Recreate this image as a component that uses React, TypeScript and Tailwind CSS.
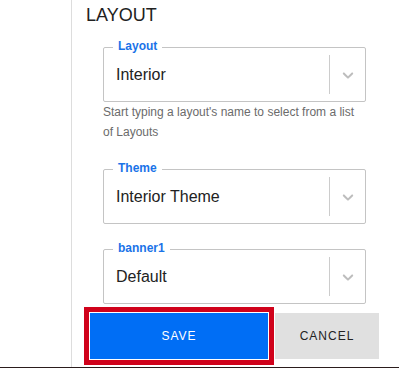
import React from "react";

const Chevron = () => (
  <svg width="18" height="18" viewBox="0 0 20 20" className="fill-[#bdbdbd]">
    <path d="M4.516 7.548c0.436-0.446 1.043-0.481 1.576 0l3.908 3.747 3.908-3.747c0.533-0.481 1.141-0.446 1.574 0 0.436 0.445 0.408 1.197 0 1.615-0.406 0.418-4.695 4.502-4.695 4.502-0.217 0.223-0.502 0.335-0.787 0.335s-0.57-0.112-0.789-0.335c0 0-4.287-4.084-4.695-4.502s-0.436-1.17 0-1.615z" />
  </svg>
);

type FieldProps = {
  label: string;
  value: string;
  className?: string;
};

const SelectField = ({ label, value, className = "" }: FieldProps) => (
  <div className={`relative h-[55px] w-[263px] rounded-[2px] border border-[#c4c4c4] ${className}`}>
    {/* floating label */}
    <span className="absolute left-[9px] top-[-9px] bg-white px-[5px] text-[12px] font-bold leading-[14px] text-[#1a73e8]">
      {label}
    </span>
    <div className="flex h-full items-stretch">
      <div className="flex flex-1 items-center pl-[12px] text-[16px] text-[#222]">{value}</div>
      <div className="my-[7px] w-px bg-[#cccccc]" />
      <div className="flex w-[35px] items-center justify-center">
        <Chevron />
      </div>
    </div>
  </div>
);

export default function App() {
  return (
    <div className="flex h-[368px] w-full flex-col bg-white font-['Liberation_Sans',Arial,sans-serif]">
      <div className="flex flex-1">
        <div className="w-[72px] shrink-0 border-r border-[#dddddd]" />

        {/* LAYOUT PANEL */}
        <div className="flex flex-1 flex-col pl-[14px] pt-[6px]">
          <h2 className="text-[18px] leading-[18px] text-[#212121]">LAYOUT</h2>

          <div className="ml-[17px] flex flex-col">
            <SelectField label="Layout" value="Interior" className="mt-[23px]" />
            <p className="w-[263px] text-[12px] leading-5 text-[#6b6b6b]">
              Start typing a layout's name to select from a list of Layouts
            </p>

            <SelectField label="Theme" value="Interior Theme" className="mt-[27px]" />
            <SelectField label="banner1" value="Default" className="mt-[25px]" />
          </div>

          {/* BUTTONS */}
          <div className="ml-[4px] mt-[9px] flex gap-[7px]">
            <button className="h-[46px] w-[178px] bg-[#006ef5] text-[12px] font-medium tracking-[1px] text-white outline outline-[5px] outline-offset-[1px] outline-[#d0021b]">
              SAVE
            </button>
            <button className="h-[46px] w-[104px] bg-[#e0e0e0] text-[12px] font-medium tracking-[1px] text-[#222]">
              CANCEL
            </button>
          </div>
        </div>
      </div>
      <div className="h-px bg-[#2b1d1d]" />
    </div>
  );
}
